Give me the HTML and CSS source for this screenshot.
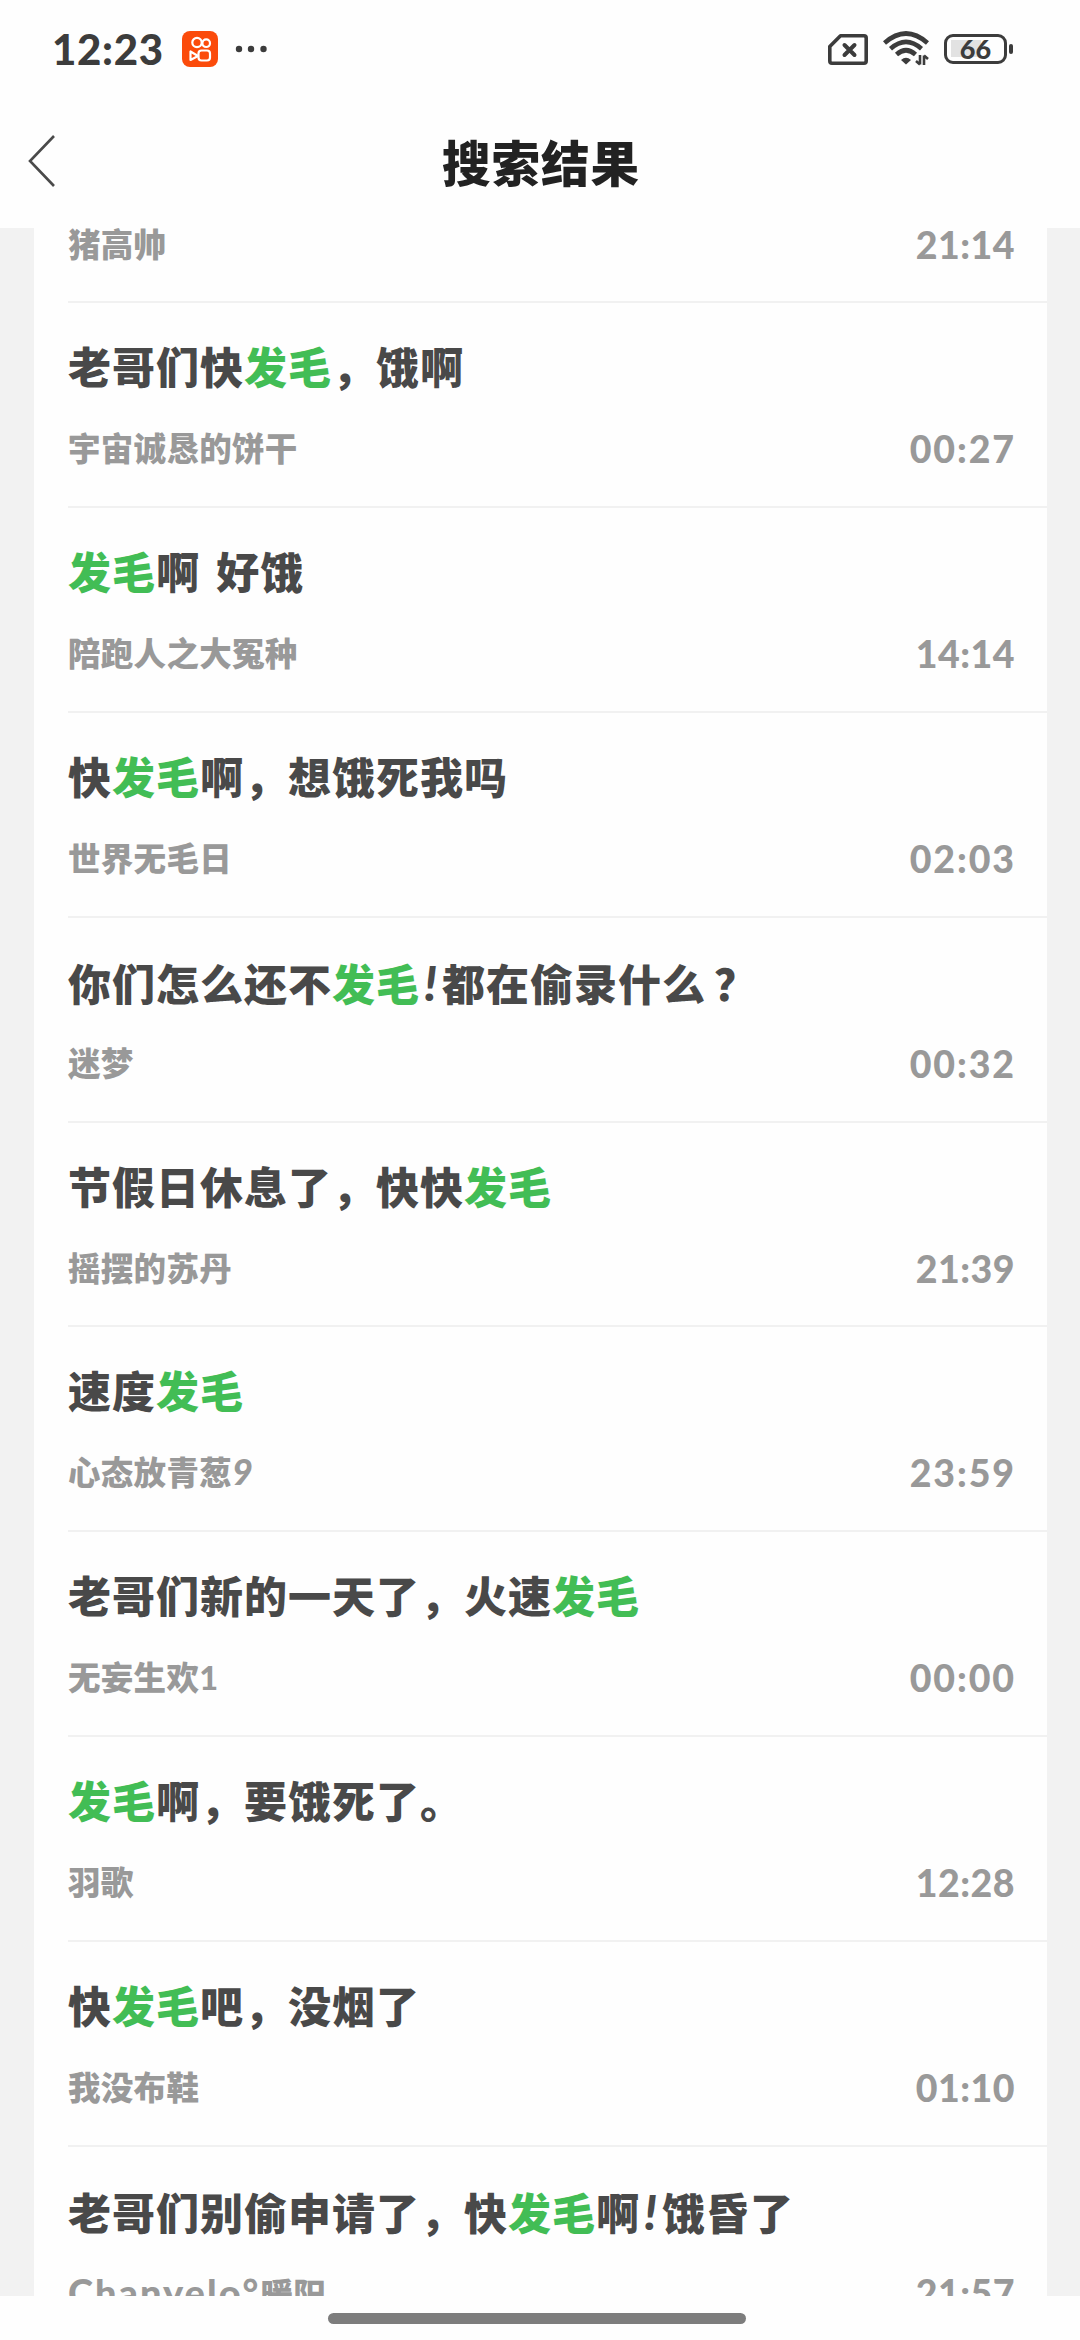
FILE: index.html
```html
<!DOCTYPE html>
<html lang="zh-CN">
<head>
<meta charset="utf-8">
<title>搜索结果</title>
<link rel="stylesheet" href="styles.css">
</head>
<body>
<div class="screen">
  <header class="status">
    <div class="status-left">
      <span class="clock">12:23</span>
      <svg class="app-icon" viewBox="0 0 36 36"><rect width="36" height="36" rx="8" fill="#fb4b0b"/><g fill="none" stroke="#fff" stroke-width="2.2" stroke-linejoin="round"><circle cx="15" cy="11.500" r="4.700"/><circle cx="24.200" cy="12.200" r="3.800"/><rect x="16.500" y="19.500" width="11.500" height="10" rx="3"/><path d="M16 25l-7.500-4.500v8.500z"/></g></svg>
      <svg class="more" viewBox="0 0 32 8" fill="#3c3c3c"><circle cx="4" cy="4" r="3.200"/><circle cx="16" cy="4" r="3.200"/><circle cx="28.500" cy="4" r="3.200"/></svg>
    </div>
    <div class="status-right">
      <svg class="sim" viewBox="0 0 40 31" fill="none" stroke="#3c3c3c"><path d="M12.500 1.800H36a2.200 2.200 0 0 1 2.200 2.200v23a2.200 2.200 0 0 1-2.200 2.200H4A2.200 2.200 0 0 1 1.800 27V12.500z" stroke-width="3.600" stroke-linejoin="round"/><path d="M16.500 11l10 10m0-10l-10 10" stroke-width="4" stroke-linecap="round"/></svg>
      <svg class="wifi" viewBox="0 0 46 36" fill="none" stroke="#3c3c3c" stroke-width="4.600"><path d="M1.500 12Q23-7 44.500 12M7.500 17.700Q23 4 38.500 17.700M13.500 23.500Q23 15 32.500 23.500"/><path d="M23 33.500l-5-4.500q5-4.500 10 0z" fill="#3c3c3c" stroke="none"/><path d="M37 24v9.500M33 30l4 3.500M41 34v-9.500M45 28l-4-3.500" stroke-width="2.600"/></svg>
      <span class="battery"><span class="battery-body">66</span><span class="battery-tip"></span></span>
    </div>
  </header>
  <nav class="nav">
    <svg class="back" viewBox="0 0 28 52" fill="none" stroke="#4a4a4a" stroke-width="2.600"><path d="M26 1L2 26l24 25"/></svg>
    <h1 class="nav-title">搜索结果</h1>
  </nav>
  <main class="viewport">
    <ul class="results">
      <li class="result result-first"><div class="meta"><span>猪高帅</span><time class="slim">21:14</time></div></li>
      <li class="result"><h2>老哥们快<em>发毛</em>，饿啊</h2><div class="meta"><span>宇宙诚恳的饼干</span><time>00:27</time></div></li>
      <li class="result"><h2><em>发毛</em>啊 好饿</h2><div class="meta"><span>陪跑人之大冤种</span><time class="slim">14:14</time></div></li>
      <li class="result"><h2>快<em>发毛</em>啊，想饿死我吗</h2><div class="meta"><span>世界无毛日</span><time>02:03</time></div></li>
      <li class="result"><h2>你们怎么还不<em>发毛</em><span class="bang">!</span>都在偷录什么<span class="query">？</span></h2><div class="meta"><span>迷梦</span><time>00:32</time></div></li>
      <li class="result"><h2>节假日休息了，快快<em>发毛</em></h2><div class="meta"><span>摇摆的苏丹</span><time class="slim">21:39</time></div></li>
      <li class="result"><h2>速度<em>发毛</em></h2><div class="meta"><span>心态放青葱<i class="nine">9</i></span><time>23:59</time></div></li>
      <li class="result"><h2>老哥们新的一天了，火速<em>发毛</em></h2><div class="meta"><span>无妄生欢1</span><time>00:00</time></div></li>
      <li class="result"><h2><em>发毛</em>啊，要饿死了。</h2><div class="meta"><span>羽歌</span><time class="slim">12:28</time></div></li>
      <li class="result"><h2>快<em>发毛</em>吧，没烟了</h2><div class="meta"><span>我没布鞋</span><time class="slim">01:10</time></div></li>
      <li class="result"><h2>老哥们别偷申请了，快<em>发毛</em>啊<span class="bang">!</span>饿昏了</h2><div class="meta"><span><span class="latin">Chanyelo°</span>暖阳</span><time class="slim">21:57</time></div></li>
    </ul>
  </main>
  <footer class="home"><span class="home-bar"></span></footer>
</div>
</body>
</html>
```
FILE: styles.css
```css
* { box-sizing: border-box; margin: 0; padding: 0; }
body { background: #fefefe; font-family: Lato, "Noto Sans CJK SC", sans-serif; }
.screen { width: 1080px; height: 2340px; display: flex; flex-direction: column; overflow: hidden; }
.status { height: 98px; flex: none; display: flex; justify-content: space-between; padding: 0 67px 0 52px; color: #3c3c3c; }
.status-left, .status-right { display: flex; align-items: center; }
.clock { width: 130px; font-size: 42px; font-weight: 900; letter-spacing: 0.700px; line-height: 98px; white-space: nowrap; }
.app-icon { width: 36px; height: 36px; }
.more { width: 32px; height: 8px; margin-left: 17px; }
.sim { width: 40px; height: 31px; margin-right: 15px; }
.wifi { width: 46px; height: 36px; margin-right: 15px; }
.battery { display: flex; align-items: center; gap: 2px; }
.battery-body { width: 63px; height: 30px; border: 3.5px solid #3c3c3c; border-radius: 9px; background: linear-gradient(#e2e2e2, #e2e2e2) 4px 3px / 30px 17px no-repeat; font-size: 27px; font-weight: 900; line-height: 23px; text-align: center; }
.battery-tip { width: 4px; height: 10px; border-radius: 2px; background: #3c3c3c; }
.nav { height: 130px; flex: none; display: flex; align-items: center; padding: 0 28px; }
.back { width: 28px; height: 52px; margin-top: -4px; }
.nav-title { flex: 1; margin-right: 26px; text-align: center; color: #222; font-size: 48.500px; font-weight: 900; letter-spacing: 1px; line-height: 130px; }
.viewport { height: 2068px; flex: none; overflow: hidden; padding: 0 33px 0 34px; background: #f2f2f2; }
.results { list-style: none; background: #fefefe; padding-left: 34px; }
.result { height: 204.900px; border-bottom: 2px solid #f1f1f1; padding: 35px 33px 0 0; }
.result h2 { height: 60px; line-height: 60px; font-size: 43px; font-weight: 900; letter-spacing: 1px; word-spacing: 5px; color: #494949; white-space: nowrap; }
.result em { font-style: normal; color: #42bd55; }
.bang { display: inline-block; width: 22px; font-size: 48px; text-align: center; font-style: italic; }
.query { margin-left: 8px; }
.meta { display: flex; justify-content: space-between; height: 40px; margin-top: 31px; line-height: 40px; font-size: 32.500px; font-weight: 900; letter-spacing: 0.300px; color: #999; white-space: nowrap; }
.meta time { font-size: 37.500px; letter-spacing: 1.900px; margin-right: -2px; }
.meta .slim { letter-spacing: 0.500px; margin-right: -1px; }
.nine { font-size: 36px; line-height: 1; }
.latin { font-size: 38px; line-height: 1; letter-spacing: 2px; }
.result-first { height: 75px; padding-top: 0; }
.result-first .meta { height: 34px; margin-top: 0; line-height: 34px; }
.home { flex: 1; display: flex; justify-content: center; padding-top: 17px; }
.home-bar { width: 418px; height: 11px; margin-right: 6px; border-radius: 6px; background: #7d7d7d; }
```
